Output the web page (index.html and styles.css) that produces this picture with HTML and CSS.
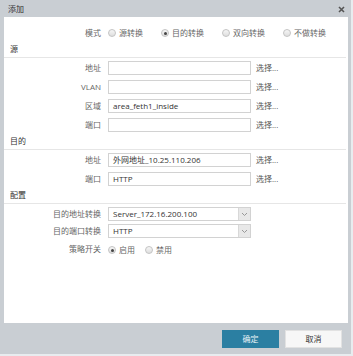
FILE: index.html
```html
<!DOCTYPE html>
<html>
<head>
<meta charset="utf-8">
<link rel="stylesheet" href="styles.css">
</head>
<body>
<div class="dialog">
  <div class="titlebar">
    <span class="title">添加</span>
    <svg class="close" width="7" height="7" viewBox="0 0 7 7"><path d="M1 1L6 6M6 1L1 6" stroke="#555" stroke-width="1.6"/></svg>
  </div>
  <div class="panel">
    <div class="mode-row">
      <span class="label">模式</span>
      <div class="radios">
        <span class="radio"><i class="dot"></i>源转换</span>
        <span class="radio"><i class="dot on"></i>目的转换</span>
        <span class="radio"><i class="dot"></i>双向转换</span>
        <span class="radio"><i class="dot"></i>不做转换</span>
      </div>
    </div>

    <div class="section-head">源</div>
    <div class="rows">
      <span class="label">地址</span><span class="input"></span><span class="pick">选择...</span>
      <span class="label">VLAN</span><span class="input"></span><span class="pick">选择...</span>
      <span class="label">区域</span><span class="input">area_feth1_inside</span><span class="pick">选择...</span>
      <span class="label">端口</span><span class="input"></span><span class="pick">选择...</span>
    </div>

    <div class="section-head">目的</div>
    <div class="rows">
      <span class="label">地址</span><span class="input">外网地址_10.25.110.206</span><span class="pick">选择...</span>
      <span class="label">端口</span><span class="input">HTTP</span><span class="pick">选择...</span>
    </div>

    <div class="section-head">配置</div>
    <div class="rows config">
      <span class="label">目的地址转换</span>
      <span class="select"><span class="val">Server_172.16.200.100</span><span class="arrow"><svg width="7" height="5" viewBox="0 0 7 5"><path d="M1 1L3.5 3.5L6 1" fill="none" stroke="#999" stroke-width="1"/></svg></span></span>
      <span></span>
      <span class="label">目的端口转换</span>
      <span class="select"><span class="val">HTTP</span><span class="arrow"><svg width="7" height="5" viewBox="0 0 7 5"><path d="M1 1L3.5 3.5L6 1" fill="none" stroke="#999" stroke-width="1"/></svg></span></span>
      <span></span>
      <span class="label">策略开关</span>
      <div class="radios small">
        <span class="radio"><i class="dot on"></i>启用</span>
        <span class="radio"><i class="dot"></i>禁用</span>
      </div>
      <span></span>
    </div>
  </div>
  <div class="footer">
    <button class="btn primary">确定</button>
    <button class="btn">取消</button>
  </div>
</div>
</body>
</html>
```

FILE: styles.css
```css
* { box-sizing: border-box; }
html, body {
  margin: 0;
  padding: 0;
}
body {
  width: 353px;
  height: 356px;
  background: #e8ecef;
  font-family: "Open Sans", "Noto Sans CJK SC", sans-serif;
  font-size: 8px;
  color: #555;
  overflow: hidden;
}
.dialog {
  width: 351px;
  height: 354px;
  background: #c9ced3;
  display: flex;
  flex-direction: column;
}
.titlebar {
  height: 17px;
  display: flex;
  align-items: center;
  justify-content: space-between;
  padding: 0 6px 0 8px;
}
.title {
  color: #333;
  font-size: 8px;
  line-height: 17px;
}
.close { display: block; margin-top: 1px; }
.panel {
  height: 306px;
  margin: 0 3px 0 4px;
  background: #fff;
  padding-top: 9px;
}
.label {
  text-align: right;
  color: #666;
  line-height: 14px;
  white-space: nowrap;
}
.mode-row {
  display: grid;
  grid-template-columns: 97px auto;
  column-gap: 7px;
  height: 14px;
  align-items: center;
}
.radios {
  display: flex;
  align-items: center;
  gap: 18px;
  color: #666;
  line-height: 14px;
}
.radios.small { gap: 10px; }
.radio {
  display: flex;
  align-items: center;
  white-space: nowrap;
}
.dot {
  width: 8px;
  height: 8px;
  border-radius: 50%;
  border: 1px solid #c4c4c4;
  background: linear-gradient(#f6f6f6, #dedede);
  margin-right: 3px;
  display: flex;
  align-items: center;
  justify-content: center;
}
.dot.on::after {
  content: "";
  width: 3px;
  height: 3px;
  border-radius: 50%;
  background: #444;
}
.section-head {
  height: 17px;
  margin-top: 1px;
  margin-right: 2px;
  padding-left: 6px;
  line-height: 16px;
  color: #333;
  border-bottom: 1px solid #e6e6e6;
}
.rows {
  display: grid;
  grid-template-columns: 97px 143px auto;
  column-gap: 7px;
  row-gap: 5px;
  margin-top: 3px;
  align-items: center;
}
.rows.config {
  row-gap: 3px;
  margin-top: 3px;
}
.input {
  height: 14px;
  border: 1px solid #d2d2d2;
  padding: 0 4px;
  line-height: 12px;
  color: #333;
  white-space: nowrap;
  overflow: hidden;
}
.pick {
  margin-left: -2px;
  color: #555;
  line-height: 14px;
}
.select {
  height: 14px;
  border: 1px solid #d2d2d2;
  display: flex;
  color: #333;
  line-height: 12px;
}
.select .val {
  flex: 1;
  padding: 0 4px;
  white-space: nowrap;
  overflow: hidden;
}
.select .arrow {
  width: 12px;
  background: #e8e8e8;
  border-left: 1px solid #d8d8d8;
  display: flex;
  align-items: center;
  justify-content: center;
}
.select .arrow svg { display: block; }
.config .radios { height: 14px; margin-top: 2px; }
.footer {
  flex: 1;
  display: flex;
  justify-content: flex-end;
  align-items: center;
  gap: 6px;
  padding-right: 9px;
}
.btn {
  width: 57px;
  height: 18px;
  border: 1px solid #e2e2e2;
  background: #f7f7f7;
  color: #333;
  font-family: "Open Sans", "Noto Sans CJK SC", sans-serif;
  font-size: 8px;
  padding: 0;
  line-height: 16px;
}
.btn.primary {
  background: #2b7fa2;
  border-color: #2b7fa2;
  color: #e8f2f6;
}
```
